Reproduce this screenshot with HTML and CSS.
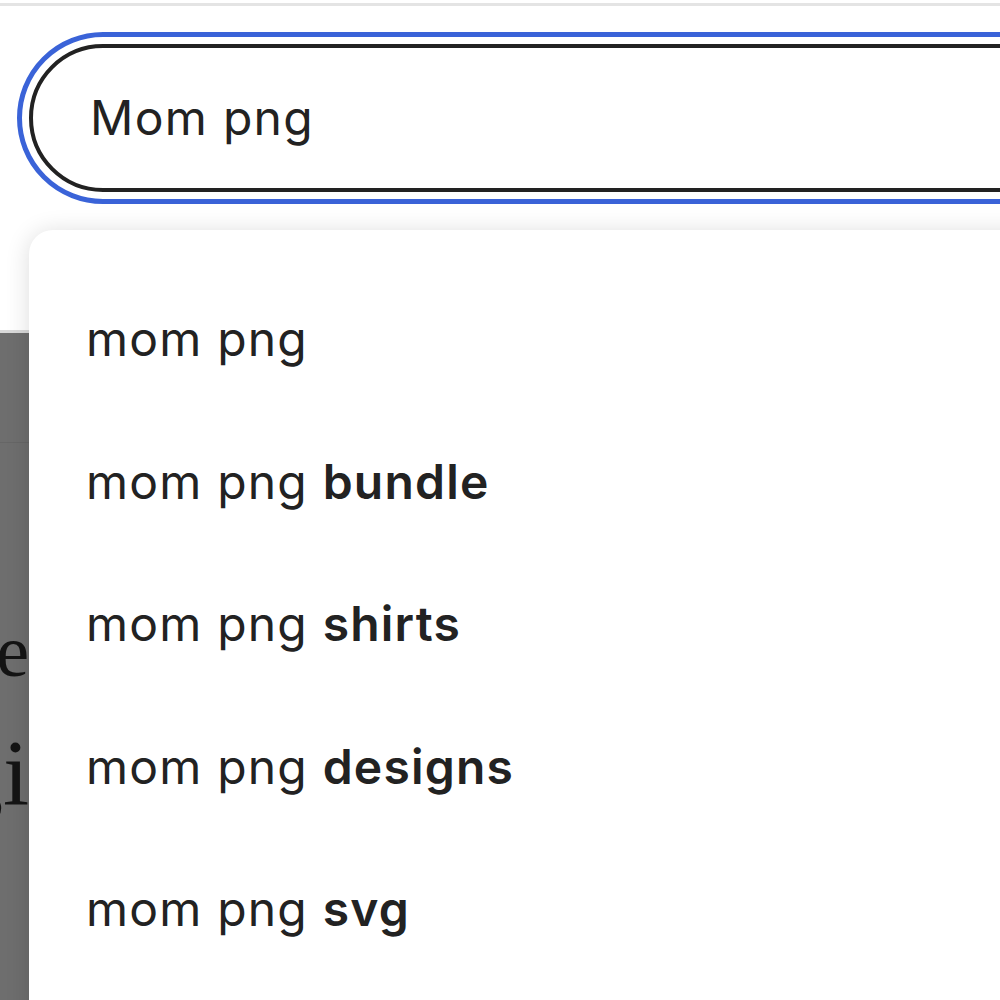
FILE: index.html
```html
<!DOCTYPE html>
<html lang="en">
<head>
<meta charset="utf-8">
<title>Search</title>
<link rel="stylesheet" href="styles.css">
</head>
<body>
<header class="header">
  <div class="topline"></div>
  <form class="search-ring">
    <div class="search-field">
      <span class="search-value">Mom png</span>
    </div>
  </form>
</header>
<main class="page">
  <div class="page-band"></div>
  <div class="page-col">
    <div class="bg-line bg-e"><span>Recipe</span></div>
    <div class="bg-line bg-i"><span>Digi</span></div>
  </div>
</main>
<ul class="suggestions">
  <li class="suggestion">mom png</li>
  <li class="suggestion">mom png <b>bundle</b></li>
  <li class="suggestion">mom png <b>shirts</b></li>
  <li class="suggestion">mom png <b>designs</b></li>
  <li class="suggestion">mom png <b>svg</b></li>
</ul>
</body>
</html>
```

FILE: styles.css
```css
* { box-sizing: border-box; }
html, body {
  margin: 0;
  padding: 0;
  width: 1000px;
  height: 1000px;
  overflow: hidden;
  background: #ffffff;
  font-family: Inter, "Noto Sans", sans-serif;
  color: #222222;
}
.header {
  height: 333px;
  padding-top: 3px;
  border-bottom: 3px solid #d9d9d9;
  background: #ffffff;
}
.topline {
  height: 3px;
  background: #e4e4e4;
}
.search-ring {
  margin: 26px 0 0 17px;
  width: 1200px;
  height: 172px;
  border: 5px solid #3a63d8;
  border-radius: 999px;
  padding: 7px;
}
.search-field {
  height: 148px;
  border: 4px solid #222222;
  border-radius: 999px;
  display: flex;
  align-items: center;
  padding-left: 57px;
}
.search-value {
  font-size: 48px;
  line-height: 1;
  letter-spacing: 1.3px;
  color: #222222;
}
.page {
  height: 667px;
  background: #6e6e6e;
}
.page-band {
  height: 110px;
  border-bottom: 1px solid #666666;
}
.page-col {
  width: 29px;
  overflow: hidden;
  padding-top: 171px;
  font-family: "Liberation Serif", serif;
  color: #141414;
}
.bg-line {
  display: flex;
  justify-content: flex-end;
  white-space: nowrap;
  font-size: 74px;
  line-height: 1;
}
.bg-i {
  margin-top: 37px;
  font-size: 94px;
}
.suggestions {
  position: absolute;
  top: 230px;
  left: 29px;
  width: 1100px;
  height: 800px;
  margin: 0;
  padding: 38px 0 0 0;
  list-style: none;
  background: #ffffff;
  border-radius: 24px;
  box-shadow: 0 2px 24px rgba(0, 0, 0, 0.14);
}
.suggestion {
  height: 142.5px;
  display: flex;
  align-items: center;
  padding-left: 57px;
  font-size: 48px;
  line-height: 1;
  letter-spacing: 1.2px;
  white-space: pre;
}
.suggestion b {
  font-weight: 600;
}
```
